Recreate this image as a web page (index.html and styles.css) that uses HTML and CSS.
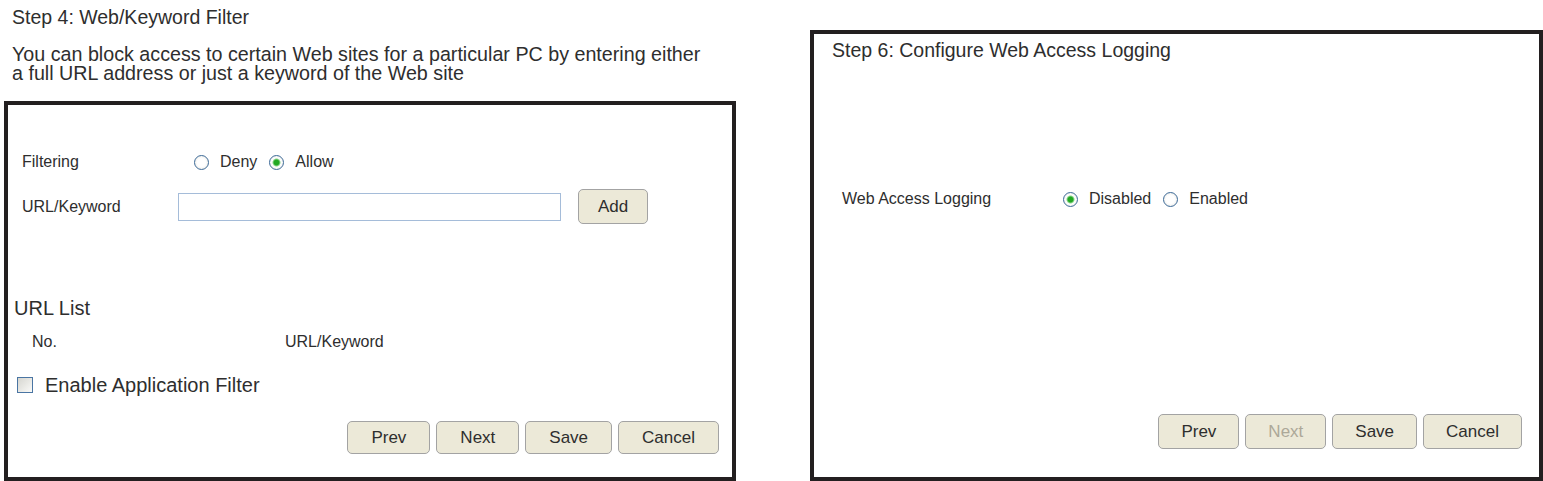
FILE: index.html
```html
<!DOCTYPE html>
<html lang="en">
<head>
    <meta charset="UTF-8">
    <meta name="viewport" content="width=device-width, initial-scale=1.0">
    <title>Setup Wizard</title>
    <link rel="stylesheet" href="styles.css">
</head>
<body>

    <div class="page">

        <!-- Step 4: Web/Keyword Filter -->
        <div class="step-col">
            <div class="step-title">Step 4: Web/Keyword Filter</div>
            <p class="step-desc">You can block access to certain Web sites for a particular PC by entering either<br>a full URL address or just a keyword of the Web site</p>

            <div class="panel panel-filter">
                <div class="form-row row-filtering">
                    <span class="form-label">Filtering</span>
                    <div class="radio-group indent">
                        <label class="radio-item"><input type="radio" name="filter">Deny</label>
                        <label class="radio-item"><input type="radio" name="filter" checked>Allow</label>
                    </div>
                </div>

                <div class="form-row row-url">
                    <span class="form-label">URL/Keyword</span>
                    <div class="url-field">
                        <input type="text" class="url-input">
                        <button class="btn btn-add">Add</button>
                    </div>
                </div>

                <div class="list-title">URL List</div>
                <div class="list-head">
                    <span class="col-no">No.</span>
                    <span>URL/Keyword</span>
                </div>

                <label class="check-row"><input type="checkbox">Enable Application Filter</label>

                <div class="btn-row">
                    <button class="btn">Prev</button>
                    <button class="btn">Next</button>
                    <button class="btn">Save</button>
                    <button class="btn">Cancel</button>
                </div>
            </div>
        </div>

        <!-- Step 6: Configure Web Access Logging -->
        <div class="panel panel-logging">
            <div class="step-title">Step 6: Configure Web Access Logging</div>

            <div class="form-row row-logging">
                <span class="form-label">Web Access Logging</span>
                <div class="radio-group">
                    <label class="radio-item"><input type="radio" name="logging" checked>Disabled</label>
                    <label class="radio-item"><input type="radio" name="logging">Enabled</label>
                </div>
            </div>

            <div class="btn-row btn-row-tall">
                <button class="btn">Prev</button>
                <button class="btn" disabled>Next</button>
                <button class="btn">Save</button>
                <button class="btn">Cancel</button>
            </div>
        </div>

    </div>

</body>
</html>
```

FILE: styles.css
```css
body {
    margin: 0;
    font-family: "Liberation Sans", Arial, sans-serif;
    color: #2e2e2e;
    background-color: #fff;
}

.page {
    display: flex;
    align-items: flex-end;
    gap: 74px;
    height: 481px;
    padding-left: 4px;
}

/* Left column */
.step-col {
    width: 732px;
    height: 481px;
    display: flex;
    flex-direction: column;
}

.step-title {
    font-size: 19.5px;
    line-height: 22px;
}

.step-col .step-title {
    padding: 6px 0 0 8px;
}

.step-desc {
    font-size: 19.7px;
    line-height: 19px;
    margin: 17px 0 0;
    padding-left: 8px;
}

.panel {
    border: 4px solid #231f20;
    box-sizing: border-box;
    display: flex;
    flex-direction: column;
}

.panel-filter {
    height: 380px;
    margin-top: auto;
    padding: 42px 13px 23px 6px;
}

.panel-logging {
    width: 733px;
    height: 451px;
    padding: 5px 17px 28px 18px;
}

/* Form rows */
.form-row {
    display: grid;
    align-items: center;
    font-size: 16px;
}

.row-filtering {
    grid-template-columns: 156px 1fr;
    height: 30px;
    margin-left: 8px;
}

.row-url {
    grid-template-columns: 156px 1fr;
    height: 35px;
    margin-top: 12px;
    margin-left: 8px;
}

.row-logging {
    grid-template-columns: 221px 1fr;
    height: 30px;
    margin-top: 123px;
    margin-left: 10px;
}

.radio-group {
    display: flex;
    align-items: center;
}

.radio-group.indent {
    margin-left: 16px;
}

.radio-item {
    display: flex;
    align-items: center;
    gap: 11px;
    margin-right: 12px;
}

.radio-item input {
    appearance: none;
    -webkit-appearance: none;
    width: 15px;
    height: 15px;
    margin: 0;
    border: 1px solid #3d6a98;
    border-radius: 50%;
    background: radial-gradient(circle, #fff 0 45%, #e2e2dc 100%);
}

.radio-item input:checked {
    background: radial-gradient(circle, #22a822 0 2.5px, #8ed68e 3.5px, #fff 4.5px, #e2e2dc 100%);
}

.url-field {
    display: flex;
    align-items: center;
}

.url-input {
    width: 383px;
    height: 28px;
    box-sizing: border-box;
    border: 1px solid #a5bcd9;
    margin: 0;
}

/* URL list */
.list-title {
    font-size: 20px;
    line-height: 24px;
    margin-top: 72px;
}

.list-head {
    display: flex;
    font-size: 16px;
    line-height: 20px;
    margin-top: 12px;
    padding-left: 18px;
}

.col-no {
    width: 253px;
}

.check-row {
    display: flex;
    align-items: center;
    gap: 12px;
    height: 24px;
    margin-top: 21px;
    font-size: 20px;
}

.check-row input {
    appearance: none;
    -webkit-appearance: none;
    width: 16px;
    height: 16px;
    margin: 0 0 0 3px;
    border: 1px solid #4a75a3;
    background: linear-gradient(135deg, #d6d6d0, #fafaf8);
}

/* Buttons */
.btn-row {
    display: flex;
    justify-content: flex-end;
    gap: 6px;
    margin-top: auto;
}

.btn {
    height: 33px;
    padding: 0 23px;
    font-family: "Liberation Sans", Arial, sans-serif;
    font-size: 17px;
    color: #2e2e2e;
    background-color: #ece9d8;
    border: 1px solid #a3a3a3;
    border-radius: 5px;
}

.btn:disabled {
    color: #aca899;
}

.btn-add {
    height: 35px;
    width: 70px;
    padding: 0;
    margin-left: 17px;
}

.btn-row-tall .btn {
    height: 35px;
    padding: 0 22px;
}
```
